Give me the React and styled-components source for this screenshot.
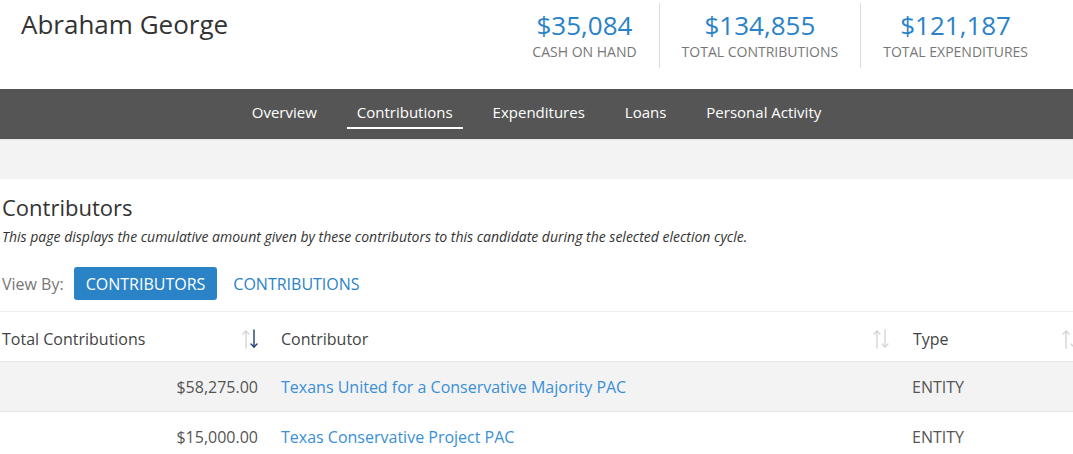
import React from "react";
import styled, { createGlobalStyle } from "styled-components";

const Global = createGlobalStyle`
  html, body { margin: 0; padding: 0; background: #fff; }
  body { font-family: "Open Sans", "Liberation Sans", sans-serif; overflow: hidden; width: 1073px; }
  * { box-sizing: border-box; }
`;

const Page = styled.div`
  width: 1073px;
  overflow: hidden;
`;

const Header = styled.header`
  height: 89px;
  display: flex;
  justify-content: space-between;
  align-items: flex-start;
`;

const Name = styled.h1`
  margin: 0;
  padding: 4px 0 0 21px;
  font-size: 26px;
  font-weight: 400;
  color: #333;
  line-height: 40px;
`;

const Stats = styled.div`
  display: flex;
  padding: 3px 23px 0 0;
`;

const Stat = styled.div`
  height: 65px;
  padding: 6px 22px 0;
  text-align: center;
  border-left: ${(p) => (p.$first ? "none" : "1px solid #ddd")};
`;

const StatValue = styled.div`
  font-size: 26px;
  line-height: 32px;
  color: #2a82c8;
`;

const StatLabel = styled.div`
  margin-top: 1px;
  font-size: 14px;
  line-height: 20px;
  color: #777;
  text-transform: uppercase;
`;

const Nav = styled.nav`
  height: 50px;
  background: #555;
  display: flex;
  justify-content: center;
  gap: 20px;
`;

const NavItem = styled.a`
  display: flex;
  align-items: center;
  align-self: flex-start;
  height: 40px;
  padding: 8px 10px 0;
  font-size: 15px;
  color: #fff;
  text-decoration: none;
  border-bottom: 2px solid ${(p) => (p.$active ? "#fff" : "transparent")};
`;

const Band = styled.div`
  height: 40px;
  background: #f3f3f3;
  box-shadow: inset 0 2px 2px -1px rgba(0, 0, 0, 0.06);
`;

const Content = styled.section`
  padding: 13px 0 0 2px;
`;

const Title = styled.h2`
  margin: 0;
  font-size: 22px;
  font-weight: 400;
  color: #333;
  line-height: 30px;
`;

const Subtitle = styled.p`
  margin: 2px 0 0;
  font-size: 14px;
  font-style: italic;
  color: #333;
  line-height: 26px;
`;

const ViewBy = styled.div`
  display: flex;
  align-items: center;
  margin-top: 17px;
  gap: 10px;
`;

const ViewLabel = styled.span`
  font-size: 16px;
  color: #777;
`;

const ViewButton = styled.button`
  font-family: inherit;
  font-size: 16px;
  height: 33px;
  border: none;
  border-radius: 3px;
  cursor: pointer;
  background: ${(p) => (p.$active ? "#2a83c7" : "transparent")};
  color: ${(p) => (p.$active ? "#fff" : "#2a82c8")};
  margin-left: ${(p) => (p.$active ? "0" : "6px")};
  padding: ${(p) => (p.$active ? "0 12px" : "0")};
`;

const Table = styled.table`
  margin-top: 11px;
  margin-left: -2px;
  width: 1090px;
  border-collapse: collapse;
  border-top: 1px solid #eee;
  table-layout: fixed;
`;

const Th = styled.th`
  height: 50px;
  text-align: left;
  font-weight: 400;
  font-size: 16px;
  color: #444;
  padding: 4px 10px 0 ${(p) => p.$pl || 12}px;
`;

const ThInner = styled.div`
  display: flex;
  align-items: center;
  justify-content: space-between;
`;

const Tr = styled.tr`
  background: ${(p) => (p.$alt ? "#f3f3f3" : "#fff")};
  border-top: 1px solid #e6e6e6;
`;

const Td = styled.td`
  height: 50px;
  font-size: 16px;
  color: #555;
  text-align: ${(p) => (p.$right ? "right" : "left")};
  padding: 0 ${(p) => (p.$right ? 12 : 10)}px 0 11px;
`;

const Link = styled.a`
  color: #3a8fd6;
  text-decoration: none;
`;

const SortIcon = ({ dir }) => (
  <svg width="20" height="20" viewBox="0 0 20 20" fill="none" strokeWidth="1.4" strokeLinecap="round" strokeLinejoin="round">
    <g stroke={dir === "up" ? "#1d3c6e" : "#d4d4d4"}>
      <path d="M6 19V2" />
      <path d="M3 5L6 2l3 3" />
    </g>
    <g stroke={dir === "down" ? "#1d3c6e" : "#d4d4d4"}>
      <path d="M14 1v17" />
      <path d="M11 15l3 3 3-3" />
    </g>
  </svg>
);

const rows = [
  { amount: "$58,275.00", name: "Texans United for a Conservative Majority PAC", type: "ENTITY" },
  { amount: "$15,000.00", name: "Texas Conservative Project PAC", type: "ENTITY" },
];

export default function App() {
  return (
    <Page>
      <Global />
      <Header>
        <Name>Abraham George</Name>
        <Stats>
          <Stat $first>
            <StatValue>$35,084</StatValue>
            <StatLabel>Cash on Hand</StatLabel>
          </Stat>
          <Stat>
            <StatValue>$134,855</StatValue>
            <StatLabel>Total Contributions</StatLabel>
          </Stat>
          <Stat>
            <StatValue>$121,187</StatValue>
            <StatLabel>Total Expenditures</StatLabel>
          </Stat>
        </Stats>
      </Header>
      <Nav>
        <NavItem>Overview</NavItem>
        <NavItem $active>Contributions</NavItem>
        <NavItem>Expenditures</NavItem>
        <NavItem>Loans</NavItem>
        <NavItem>Personal Activity</NavItem>
      </Nav>
      <Band />
      <Content>
        <Title>Contributors</Title>
        <Subtitle>
          This page displays the cumulative amount given by these contributors to this candidate during the selected election cycle.
        </Subtitle>
        <ViewBy>
          <ViewLabel>View By:</ViewLabel>
          <ViewButton $active>CONTRIBUTORS</ViewButton>
          <ViewButton>CONTRIBUTIONS</ViewButton>
        </ViewBy>
        <Table>
          <colgroup>
            <col style={{ width: 270 }} />
            <col style={{ width: 631 }} />
            <col style={{ width: 189 }} />
          </colgroup>
          <thead>
            <tr>
              <Th $pl={2}>
                <ThInner>Total Contributions<SortIcon dir="down" /></ThInner>
              </Th>
              <Th $pl={11}>
                <ThInner>Contributor<SortIcon /></ThInner>
              </Th>
              <Th $pl={12}>
                <ThInner>Type<SortIcon /></ThInner>
              </Th>
            </tr>
          </thead>
          <tbody>
            {rows.map((r, i) => (
              <Tr key={i} $alt={i % 2 === 0}>
                <Td $right>{r.amount}</Td>
                <Td><Link href="#">{r.name}</Link></Td>
                <Td>{r.type}</Td>
              </Tr>
            ))}
          </tbody>
        </Table>
      </Content>
    </Page>
  );
}
